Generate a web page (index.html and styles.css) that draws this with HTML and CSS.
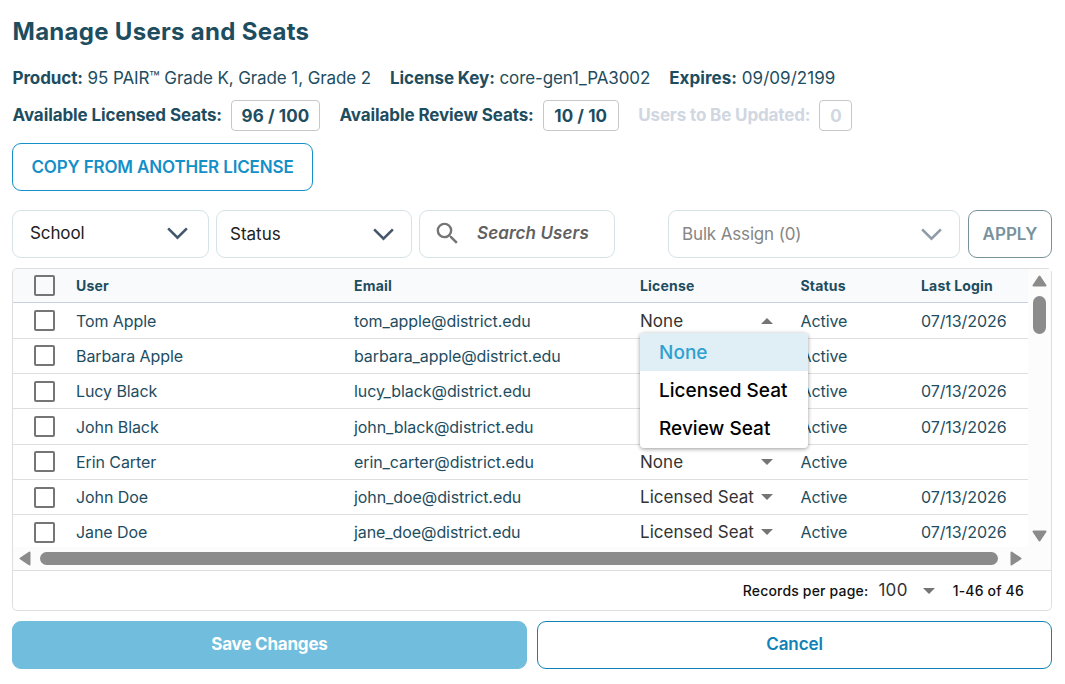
FILE: index.html
```html
<!DOCTYPE html>
<html lang="en">
<head>
    <meta charset="UTF-8">
    <meta name="viewport" content="width=device-width, initial-scale=1.0">
    <title>Manage Users and Seats</title>
    <link rel="stylesheet" href="styles.css">
</head>
<body>
    <h1>Manage Users and Seats</h1>
    <div class="license-info">
        <span><b>Product:</b> 95 PAIR™ Grade K, Grade 1, Grade 2</span>
        <span><b>License Key:</b> core-gen1_PA3002</span>
        <span class="expires"><b>Expires:</b> 09/09/2199</span>
    </div>
    <div class="seats">
        <div class="seat-group"><span class="seat-label">Available Licensed Seats:</span><span class="seat-count licensed">96 / 100</span></div>
        <div class="seat-group"><span class="seat-label">Available Review Seats:</span><span class="seat-count review">10 / 10</span></div>
        <div class="seat-group disabled"><span class="seat-label">Users to Be Updated:</span><span class="seat-count updated">0</span></div>
    </div>
    <button class="btn copy-btn">COPY FROM ANOTHER LICENSE</button>

    <div class="filters">
        <div class="filter school">
            <span>School</span>
            <svg class="chevron" viewBox="0 0 24 16"><path d="M2 2.5 L12 12.5 L22 2.5"/></svg>
        </div>
        <div class="filter status">
            <span>Status</span>
            <svg class="chevron" viewBox="0 0 24 16"><path d="M2 2.5 L12 12.5 L22 2.5"/></svg>
        </div>
        <div class="filter search">
            <svg class="search-icon" viewBox="0 0 24 24"><path d="M15.5 14h-.79l-.28-.27A6.471 6.471 0 0 0 16 9.5 6.5 6.5 0 1 0 9.5 16c1.61 0 3.09-.59 4.23-1.57l.27.28v.79l5 4.99L20.49 19l-4.99-5zm-6 0C7.01 14 5 11.99 5 9.5S7.01 5 9.5 5 14 7.01 14 9.5 11.99 14 9.5 14z"/></svg>
            <span>Search Users</span>
        </div>
        <div class="filter bulk">
            <span>Bulk Assign (0)</span>
            <svg class="chevron" viewBox="0 0 24 16"><path d="M2 2.5 L12 12.5 L22 2.5"/></svg>
        </div>
        <button class="btn apply-btn">APPLY</button>
    </div>

    <div class="table-card">
        <div class="table-scroll">
            <div class="rows">
                <div class="row head">
                    <i class="checkbox"></i><span>User</span><span>Email</span><span>License</span><span>Status</span><span>Last Login</span>
                </div>
                <div class="row">
                    <i class="checkbox"></i><span>Tom Apple</span><span>tom_apple@district.edu</span>
                    <div class="license">None<i class="arrow up"></i>
                        <ul class="menu">
                            <li class="selected">None</li>
                            <li>Licensed Seat</li>
                            <li>Review Seat</li>
                        </ul>
                    </div>
                    <span>Active</span><span>07/13/2026</span>
                </div>
                <div class="row">
                    <i class="checkbox"></i><span>Barbara Apple</span><span>barbara_apple@district.edu</span><div class="license"></div><span>Active</span><span></span>
                </div>
                <div class="row">
                    <i class="checkbox"></i><span>Lucy Black</span><span>lucy_black@district.edu</span><div class="license"></div><span>Active</span><span>07/13/2026</span>
                </div>
                <div class="row">
                    <i class="checkbox"></i><span>John Black</span><span>john_black@district.edu</span><div class="license"></div><span>Active</span><span>07/13/2026</span>
                </div>
                <div class="row">
                    <i class="checkbox"></i><span>Erin Carter</span><span>erin_carter@district.edu</span><div class="license">None<i class="arrow"></i></div><span>Active</span><span></span>
                </div>
                <div class="row">
                    <i class="checkbox"></i><span>John Doe</span><span>john_doe@district.edu</span><div class="license">Licensed Seat<i class="arrow"></i></div><span>Active</span><span>07/13/2026</span>
                </div>
                <div class="row">
                    <i class="checkbox"></i><span>Jane Doe</span><span>jane_doe@district.edu</span><div class="license">Licensed Seat<i class="arrow"></i></div><span>Active</span><span>07/13/2026</span>
                </div>
            </div>
            <div class="scroll-y">
                <svg width="15" height="12" viewBox="0 0 15 12"><path d="M7.5 1.5 L13.5 10.5 H1.5 Z"/></svg>
                <div class="thumb"></div>
                <svg class="down" width="15" height="12" viewBox="0 0 15 12"><path d="M1.5 1.5 H13.5 L7.5 10.5 Z"/></svg>
            </div>
            <div class="scroll-x">
                <svg width="12" height="15" viewBox="0 0 12 15"><path d="M1.5 7.5 L10.5 1.5 V13.5 Z"/></svg>
                <div class="thumb"></div>
                <svg width="12" height="15" viewBox="0 0 12 15"><path d="M10.5 7.5 L1.5 1.5 V13.5 Z"/></svg>
            </div>
        </div>
        <div class="pagination">
            <span>Records per page:</span>
            <span class="per-page">100</span>
            <i class="arrow"></i>
            <span>1-46 of 46</span>
        </div>
    </div>

    <div class="actions">
        <button class="btn save-btn">Save Changes</button>
        <button class="btn cancel-btn">Cancel</button>
    </div>
</body>
</html>
```
FILE: styles.css
```css
* {
    box-sizing: border-box;
}
body {
    font-family: Inter, Arial, sans-serif;
    background-color: #fff;
    color: #1d4d5f;
    margin: 0;
    padding: 16px 13px 0 12px;
    font-size: 16px;
    overflow: hidden;
}
h1 {
    margin: 0;
    padding-left: 0.5px;
    font-size: 24px;
    line-height: 32px;
    letter-spacing: 0.29px;
}
.license-info {
    display: flex;
    gap: 19px;
    margin-top: 18px;
    padding-left: 0.5px;
    font-size: 17px;
    line-height: 24px;
    letter-spacing: -0.1px;
    white-space: nowrap;
}
.expires {
    letter-spacing: 0.05px;
}
.seats {
    display: flex;
    gap: 19px;
    margin-top: 10px;
    height: 32px;
}
.seat-group {
    display: flex;
    gap: 9px;
    font-size: 17px;
    font-weight: bold;
    line-height: 31px;
    white-space: nowrap;
}
.seat-label {
    padding-left: 0.5px;
    letter-spacing: -0.1px;
}
.seat-count {
    border: 1px solid #c8c8c8;
    border-radius: 4px;
    height: 31px;
    text-align: center;
}
.licensed {
    width: 89px;
    letter-spacing: 0.1px;
}
.review {
    width: 76px;
    letter-spacing: 0.1px;
}
.updated {
    width: 33px;
}
.disabled {
    color: #d0d7e1;
}
.disabled .seat-label {
    letter-spacing: -0.13px;
}
.btn {
    display: block;
    height: 48px;
    border: 1px solid #148fc8;
    border-radius: 9px;
    background-color: #fff;
    color: #148fc8;
    font-family: inherit;
    font-size: 17px;
    font-weight: 600;
    padding: 0;
}
.copy-btn {
    width: 301px;
    margin-top: 11px;
    letter-spacing: -0.15px;
}
.filters {
    display: flex;
    margin-top: 19px;
}
.filter {
    height: 48px;
    border: 1px solid #d5e3e6;
    border-radius: 9px;
    display: flex;
    align-items: center;
    justify-content: space-between;
    padding: 0 16px 0 13px;
    color: #212121;
    font-size: 17px;
}
.school {
    width: 197px;
    padding: 0 19px 2px 17px;
    margin-right: 7px;
    letter-spacing: -0.1px;
}
.status {
    width: 196px;
    margin-right: 7px;
}
.search {
    width: 196px;
    justify-content: flex-start;
    gap: 15px;
    padding: 0 0 2px 13px;
    color: #616161;
    font-weight: 600;
    font-style: italic;
    letter-spacing: 0.12px;
}
.bulk {
    width: 292px;
    margin-left: auto;
    margin-right: 8px;
    color: #868686;
    letter-spacing: -0.15px;
}
.chevron {
    width: 23px;
    height: 15px;
    fill: none;
    stroke: #43566b;
    stroke-width: 2.7;
}
.bulk .chevron {
    stroke: #8f9aa6;
}
.search-icon {
    width: 29px;
    height: 29px;
    fill: #757575;
}
.apply-btn {
    width: 84px;
    color: #78929c;
    border-color: #78929c;
}
.table-card {
    margin-top: 10px;
    height: 343px;
    border: 1px solid #dedede;
    border-radius: 5px;
}
.table-scroll {
    display: grid;
    grid-template-columns: 1fr 23px;
    grid-template-rows: 278px 23px;
}
.row {
    display: grid;
    grid-template-columns: 42px 278px 286px 160.5px 120.5px 1fr;
    align-items: center;
    height: 35.35px;
    padding-left: 21px;
    border-bottom: 1px solid #dedede;
    letter-spacing: -0.08px;
}
.row:last-child {
    height: 34px;
    border-bottom: none;
}
.row.head {
    height: 34.4px;
    background-color: #f9fafc;
    border-bottom-color: #c7d0e0;
    border-top-left-radius: 5px;
    font-size: 14px;
    font-weight: bold;
    letter-spacing: 0.18px;
}
.checkbox {
    width: 21px;
    height: 21px;
    border: 2px solid #757575;
    border-radius: 2px;
}
.license {
    position: relative;
    display: flex;
    justify-content: space-between;
    align-items: center;
    width: 133px;
    color: #333;
    font-size: 17px;
    letter-spacing: 0.03px;
}
.arrow {
    border: 6px solid transparent;
    border-top-color: #757575;
    border-bottom: none;
}
.arrow.up {
    border-top: none;
    border-bottom: 6px solid #757575;
}
/* open license dropdown */
.menu {
    position: absolute;
    top: 22.6px;
    left: 0;
    z-index: 2;
    width: 168px;
    margin: 0;
    padding: 0 0 1px;
    list-style: none;
    background-color: #fff;
    border-radius: 4px;
    overflow: hidden;
    box-shadow: 0 1px 4px rgba(0, 0, 0, 0.4);
    color: #000;
    font-size: 19px;
    font-weight: 500;
}
.menu li {
    height: 38px;
    line-height: 39px;
    padding-left: 19px;
}
.menu .selected {
    background-color: #e0eef5;
    color: #2fa1cf;
}
.scroll-y, .scroll-x {
    display: flex;
    align-items: center;
    background-color: #fcfcfc;
}
.scroll-y {
    flex-direction: column;
    grid-row: 1 / 3;
    grid-column: 2;
    padding: 6px 0 28px;
}
.scroll-x {
    padding: 0 5px 0 6px;
    gap: 9px;
}
.scroll-x svg:last-child {
    margin-left: 3px;
}
.scroll-x svg, .scroll-y svg {
    fill: #8b8b8b;
    stroke: #8b8b8b;
    stroke-width: 2;
    stroke-linejoin: round;
}
.thumb {
    background-color: #8b8b8b;
    border-radius: 7px;
}
.scroll-y .thumb {
    width: 13px;
    height: 38px;
    margin-top: 9px;
}
.down {
    margin-top: auto;
}
.scroll-x .thumb {
    height: 13px;
    width: 958px;
}
.pagination {
    display: flex;
    align-items: center;
    justify-content: flex-end;
    height: 40px;
    border-top: 1px solid #dedede;
    padding-right: 27px;
    color: #111;
    font-size: 14px;
    font-weight: 500;
    letter-spacing: 0.18px;
}
.per-page {
    margin: 0 15px 2px 10px;
    color: #333;
    font-size: 17px;
    font-weight: 400;
    letter-spacing: 0.3px;
}
.pagination .arrow {
    margin-right: 18px;
}
.actions {
    display: grid;
    grid-template-columns: 1fr 1fr;
    gap: 10px;
    margin-top: 10px;
}
.save-btn, .cancel-btn {
    padding-bottom: 2px;
    letter-spacing: -0.1px;
}
.save-btn {
    background-color: #70bddd;
    border-color: #70bddd;
    color: #fff;
    font-weight: 700;
    letter-spacing: -0.2px;
}
.cancel-btn {
    color: #0f82b8;
    border-color: #0f82b8;
}
```
